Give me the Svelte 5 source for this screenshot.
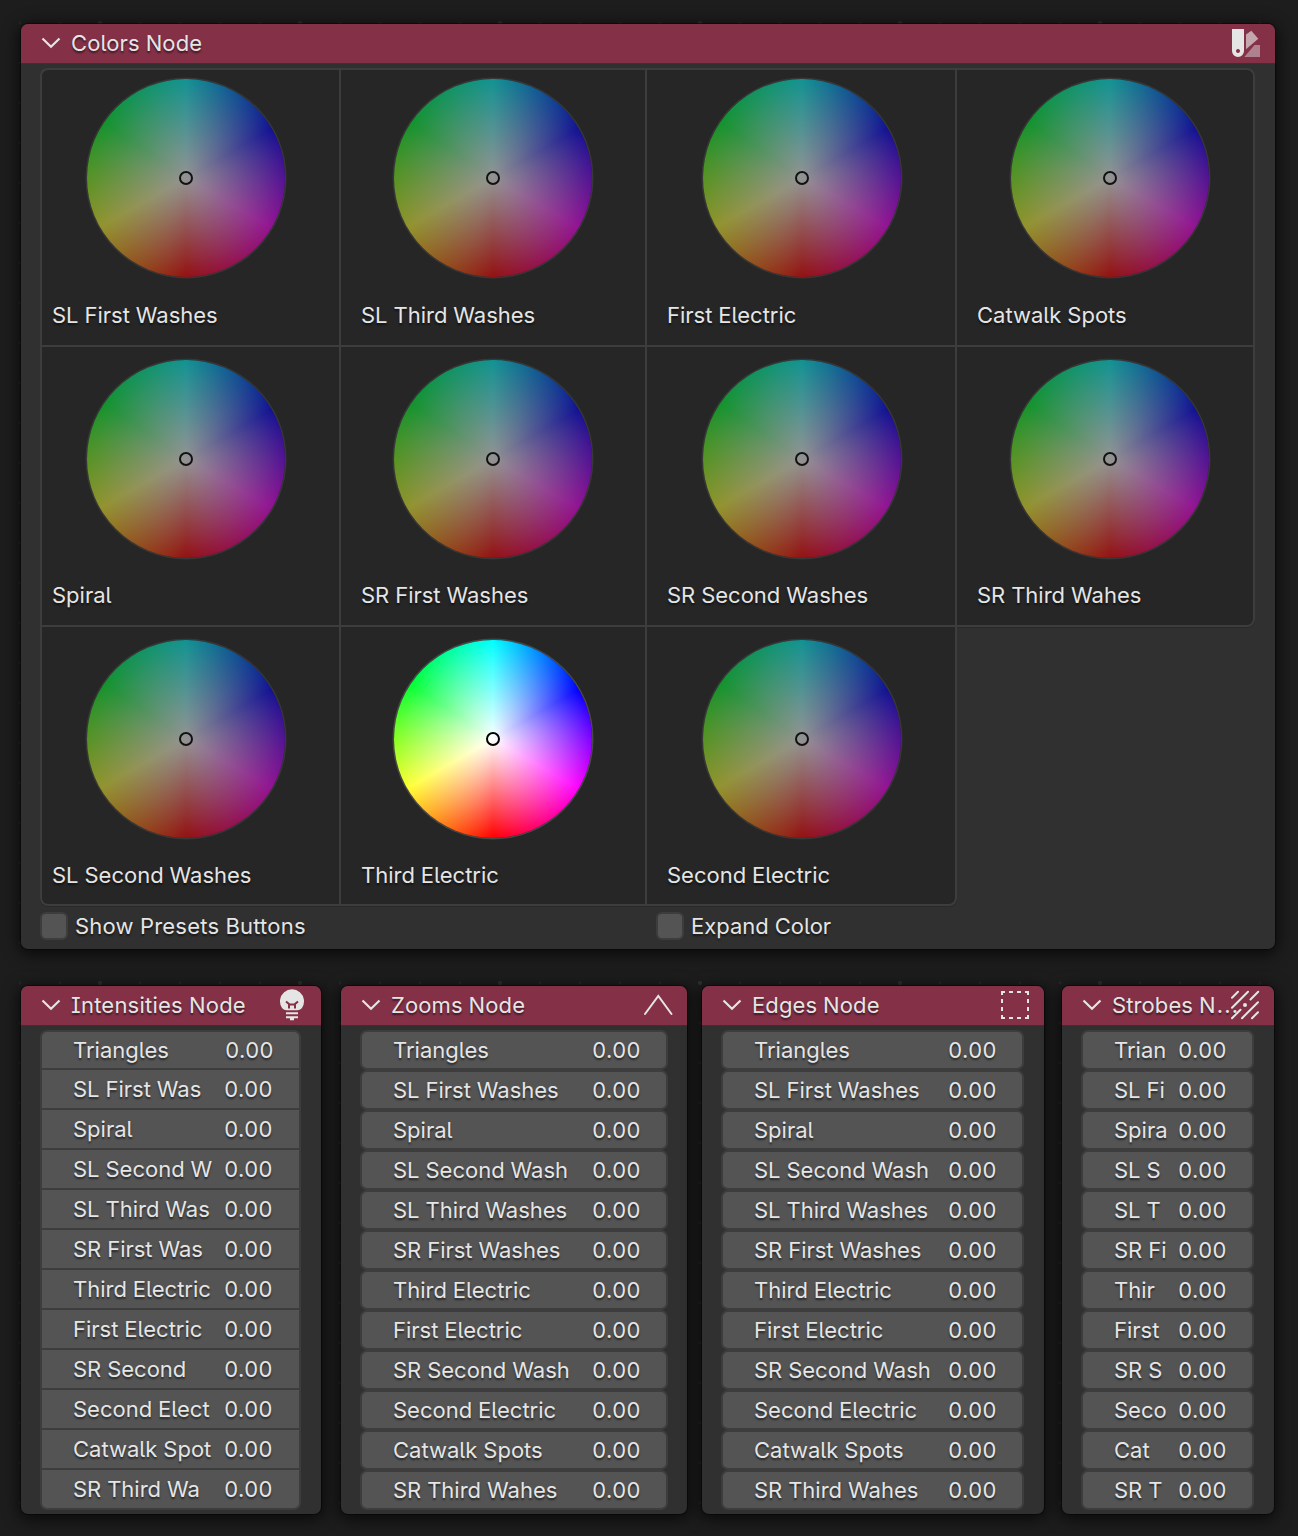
<script>
  const wheels = [
    'SL First Washes', 'SL Third Washes', 'First Electric', 'Catwalk Spots',
    'Spiral', 'SR First Washes', 'SR Second Washes', 'SR Third Wahes',
    'SL Second Washes', 'Third Electric', 'Second Electric'
  ];
  const lit = 'Third Electric';

  const full = [
    'Triangles', 'SL First Washes', 'Spiral', 'SL Second Wash', 'SL Third Washes', 'SR First Washes',
    'Third Electric', 'First Electric', 'SR Second Wash', 'Second Electric', 'Catwalk Spots', 'SR Third Wahes'
  ];
  const nodes = [
    {
      title: 'Intensities Node', kind: 'intensities', icon: 'bulb',
      rows: ['Triangles', 'SL First Was', 'Spiral', 'SL Second W', 'SL Third Was', 'SR First Was',
        'Third Electric', 'First Electric', 'SR Second', 'Second Elect', 'Catwalk Spot', 'SR Third Wa']
    },
    { title: 'Zooms Node', kind: 'zooms', icon: 'zoom', rows: full },
    { title: 'Edges Node', kind: 'edges', icon: 'edges', rows: full },
    {
      title: 'Strobes N', cut: true, kind: 'strobes', icon: 'strobe',
      rows: ['Trian', 'SL Fi', 'Spira', 'SL S', 'SL T', 'SR Fi', 'Thir', 'First', 'SR S', 'Seco', 'Cat', 'SR T']
    }
  ];
</script>

{#snippet head(title, icon, cut)}
  <header>
    <svg class="chevron" viewBox="0 0 20 12" width="20" height="12">
      <path d="M1.500 1.500 L10 9.700 L18.500 1.500" />
    </svg>
    <h2>{title}{#if cut}<span class="dots">...</span>{/if}</h2>
    <svg class="icon" viewBox="0 0 32 32" width="32" height="32">
      {#if icon === 'swatch'}
        <path class="solid" fill-rule="evenodd" d="M2 2h12v22a6 6 0 0 1-12 0zM8 22a2 2 0 1 0 .01 0z" />
        <path class="solid mid" d="M16 7.500 L21.300 3.700 L28.300 11.700 L16 22.300z" />
        <path class="solid low" d="M14.300 30 L24.500 18H30V30z" />
      {:else if icon === 'bulb'}
        <path class="solid" d="M10.700 21.300C8.500 21.300 7 20 5.900 18.800A12 12 0 1 1 26.100 18.800C25 20 23.500 21.300 21.300 21.300z" />
        <path class="filament" d="M10 12.500l3 2.500V19.500M22 12.500l-3 2.500V19.500M13 15.500h6" />
        <path class="bar" d="M10 24.300h12M10 28.300h12M14 30.200h4" />
      {:else if icon === 'zoom'}
        <path class="line" d="M3 25 L16.300 7 L29.500 25" />
      {:else if icon === 'edges'}
        <path class="bar" d="M2 3H6M3 2V6M10 3h4M18 3h4M26 3h3v3M29 10v4M29 18v4M29 26v3h-3M22 29h-4M14 29h-4M6 29H3v-3M3 22v-4M3 14v-4" />
      {:else}
        <path class="line" d="M3 8.700l6-6M3 18.700l16-16M21.500 10.500l7.700-7.700M3 29.200l8.500-8.500M13 29.200l16-16M23 29.200l6-6" />
        <circle class="solid" cx="16" cy="16" r="2" />
      {/if}
    </svg>
  </header>
{/snippet}

<main>
  <section class="node colors">
    {@render head('Colors Node', 'swatch', false)}
    <div class="grid">
      {#each wheels as name}
        <div class="cell">
          <div class="wheel" class:lit={name === lit}><i></i></div>
          <span>{name}</span>
        </div>
      {/each}
    </div>
    <div class="options">
      <label class="wide"><b></b>Show Presets Buttons</label>
      <label><b></b>Expand Color</label>
    </div>
  </section>

  <div class="bottom">
    {#each nodes as node}
      <section class="node {node.kind}">
        {@render head(node.title, node.icon, node.cut)}
        <ul>
          {#each node.rows as row}
            <li><span>{row}</span><span class="value">0.00</span></li>
          {/each}
        </ul>
      </section>
    {/each}
  </div>
</main>

<style>
  :global(body) { background: #1d1d1d; }
  main {
    box-sizing: border-box;
    width: 1298px;
    height: 1536px;
    overflow: hidden;
    padding: 24px 0 0 21px;
    /* editor canvas grid: faint dots, with every fifth one stronger */
    background:
      radial-gradient(circle at 100px 23px, #303030 1.500px, #30303000 2.500px) 0 0 / 200px 960px,
      radial-gradient(circle at 20px 23px, #262626 1px, #26262600 2px) 0 0 / 40px 40px,
      #1d1d1d;
    font-family: Inter, sans-serif;
    font-size: 22px;
    line-height: 28px;
    font-feature-settings: 'cv05', 'cv08';
    word-spacing: -0.300px;
    color: #e5e5e5;
    text-shadow: 0 2px 2px rgba(0, 0, 0, 0.55);
    white-space: nowrap;
  }
  .node {
    box-sizing: border-box;
    background: #303030;
    border-radius: 7px;
    box-shadow: 0 0 0 1px rgba(0, 0, 0, 0.4), 0 3px 16px 2px rgba(0, 0, 0, 0.7);
  }
  .colors { width: 1254px; height: 925px; }
  header {
    box-sizing: border-box;
    display: flex;
    align-items: center;
    height: 39px;
    padding: 0 13px 1px 20px;
    background: #843148;
    border-radius: 7px 7px 0 0;
    box-shadow: 0 1px 0 #4d2733;
  }
  h2 { margin: 0 0 0 10px; font: inherit; letter-spacing: 0.1px; flex: 1; width: 0; }
  .intensities h2 { letter-spacing: 0.22px; }
  .dots { letter-spacing: 1.200px; margin-left: 1px; }
  svg { fill: none; stroke: #e5e5e5; stroke-width: 2; flex: none; }
  .chevron { stroke-width: 2.200; }
  .solid { fill: #e5e5e5; stroke: none; }
  .mid { fill-opacity: 0.65; }
  .low { fill-opacity: 0.45; }
  .filament { stroke: #843148; }
  .line { stroke-linecap: round; }

  .grid {
    display: grid;
    grid-template-columns: 299px 306px 310px 300px;
    grid-template-rows: 277px 280px 281px;
    margin: 5px 0 0 19px;
  }
  .cell {
    display: flex;
    flex-direction: column;
    align-items: flex-start;
    background: #262626;
    border: solid #3d3d3d;
    border-width: 2px 0 0 2px;
    padding: 9px 0 0 20px;
  }
  .cell:nth-child(n + 5) { padding-top: 13px; }
  .cell:nth-child(n + 5) .wheel { margin-bottom: 23px; }
  .cell:nth-child(n + 9) { box-shadow: 0 1px 0 #292929; border-bottom-width: 2px; }
  .cell:nth-child(4n + 1) { padding-left: 10px; }
  .cell:nth-child(4n) { border-right-width: 2px; }
  .cell:nth-child(8) {
    border-bottom-width: 2px;
    margin-bottom: -2px;
    border-bottom-right-radius: 8px;
    box-shadow: 0 1px 0 #292929;
  }
  .cell:nth-child(11) { border-right-width: 2px; margin-right: -2px; border-bottom-right-radius: 8px; }
  .cell:nth-child(1) { border-top-left-radius: 8px; }
  .cell:nth-child(4) { border-top-right-radius: 8px; }
  .cell:nth-child(9) { border-bottom-left-radius: 8px; }
  .wheel {
    display: grid;
    place-items: center;
    width: 198px;
    height: 198px;
    margin: 0 0 24px 33px;
    border-radius: 50%;
    opacity: 0.5;
    box-shadow: 0 0 0 1.500px #484848;
    background:
      radial-gradient(closest-side, #fff, #fff0),
      conic-gradient(#0ff, #00f 60deg, #f0f 120deg, #f00 180deg, #ff3 240deg, #8f2 270deg, #0f3 304deg, #0ff);
  }
  .cell:nth-child(4n + 1) .wheel { margin-left: 35px; }
  .cell:nth-child(4n + 3) .wheel { margin-left: 36px; }
  .cell:nth-child(4n) .wheel { margin-left: 34px; }
  .wheel.lit { opacity: 1; }
  .wheel i { width: 10px; height: 10px; border: 2px solid #000; border-radius: 50%; }

  .options { display: flex; padding: 6px 0 0 19px; }
  label { display: flex; align-items: center; gap: 7px; width: 616px; }
  .wide { letter-spacing: 0.22px; }
  label b {
    box-sizing: border-box;
    width: 28px;
    height: 28px;
    background: #545454;
    border: 2px solid #3d3d3d;
    border-radius: 6px;
  }

  .bottom { display: flex; margin-top: 37px; }
  .bottom .node { height: 528px; }
  .intensities { width: 300px; margin-right: 20px; }
  .zooms { width: 346px; margin-right: 15px; }
  .edges { width: 342px; margin-right: 18px; }
  .strobes { width: 212px; }
  ul { list-style: none; margin: 5px 20px 0 19px; padding: 0; }
  .zooms ul { margin-right: 19px; }
  li {
    box-sizing: border-box;
    display: flex;
    justify-content: space-between;
    align-items: center;
    height: 40px;
    padding: 0 25px 0 31px;
    background: #545454;
    border: 2px solid #3d3d3d;
    border-radius: 7px;
  }
  .value { letter-spacing: 0.500px; }
  .intensities li { border-bottom-width: 0; border-radius: 0; padding-right: 26px; }
  .intensities li:first-child { border-radius: 7px 7px 0 0; height: 38px; padding-right: 25px; }
  .intensities li:last-child { border-radius: 0 0 7px 7px; height: 42px; border-bottom-width: 2px; }
</style>
